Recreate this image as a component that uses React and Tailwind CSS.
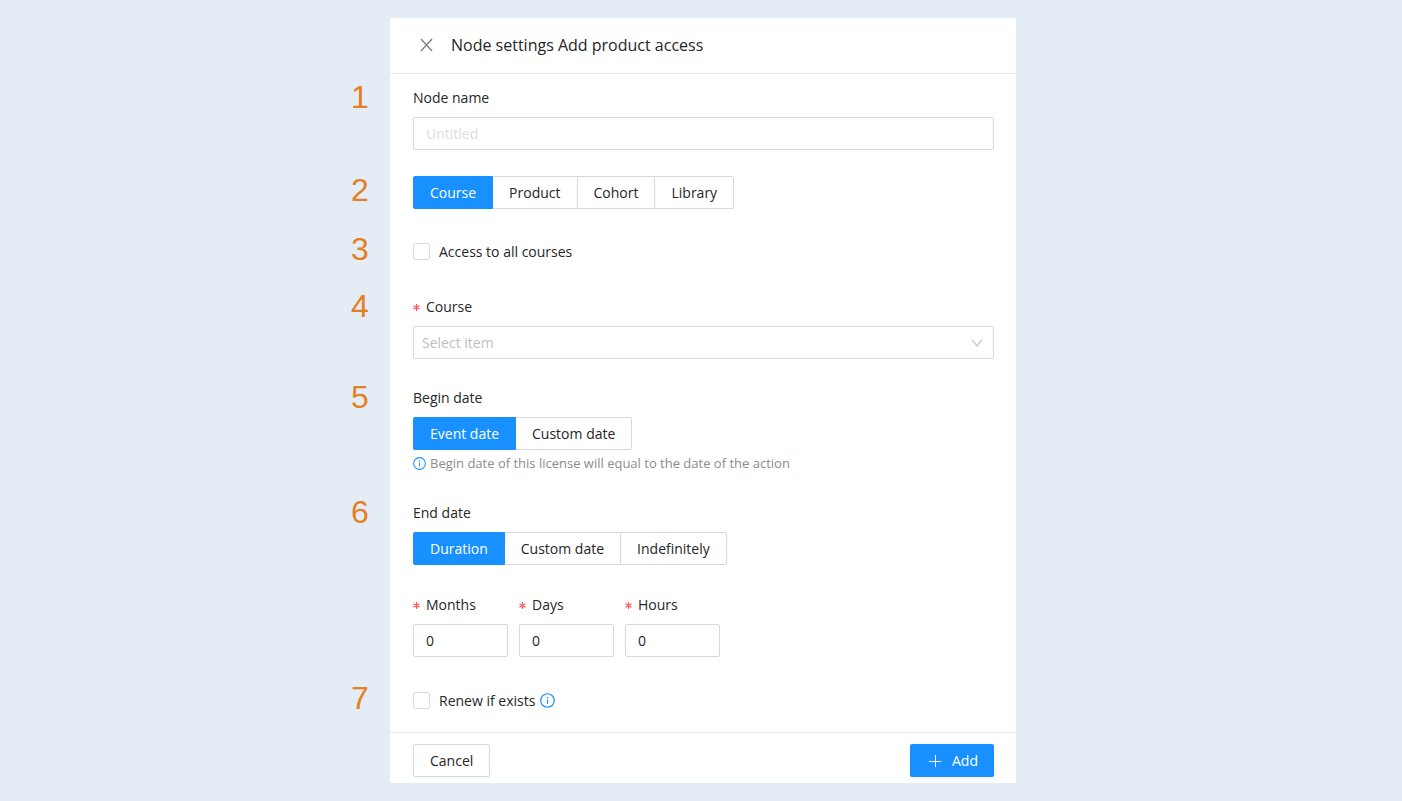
import { useState } from 'react';

const ACCESS_TYPES = ['Course', 'Product', 'Cohort', 'Library'];
const BEGIN_OPTIONS = ['Event date', 'Custom date'];
const END_OPTIONS = ['Duration', 'Custom date', 'Indefinitely'];

function InfoIcon({ className }) {
  return (
    <svg viewBox="0 0 16 16" fill="none" stroke="#1890ff" className={className} aria-hidden="true">
      <circle cx="8" cy="8" r="7.2" strokeWidth="1.3" />
      <path d="M8 7v4.6" strokeWidth="1.3" />
      <path d="M8 4.2v1.5" strokeWidth="1.5" />
    </svg>
  );
}

// One form row: number in the gutter, fields on the white panel
function Section({ number, labelled, className, children }) {
  return (
    <section className="contents">
      <div className={`${className} ${labelled ? 'leading-9' : 'leading-7'} pl-px font-['Liberation_Sans',sans-serif] text-[32px] text-[#e67e22]`}>
        {number}
      </div>
      <div className={`${className} bg-white pr-[22px] pl-[23px]`}>{children}</div>
    </section>
  );
}

function FieldLabel({ htmlFor, required, children }) {
  const Tag = htmlFor ? 'label' : 'div';
  return (
    <Tag htmlFor={htmlFor} className="flex h-[38px] items-center">
      {required && (
        <svg viewBox="0 0 8 8" stroke="#ff4d4f" strokeWidth="1.2" className="mr-1.5 size-[7px]" aria-hidden="true">
          <path d="M4 0v8M.5 2l7 4M7.5 2l-7 4" />
        </svg>
      )}
      {children}
    </Tag>
  );
}

function ButtonGroup({ options, value, onChange, label }) {
  return (
    <div role="group" aria-label={label} className="flex h-[33px]">
      {options.map((option) => (
        <button
          key={option}
          type="button"
          aria-pressed={value === option}
          onClick={() => onChange(option)}
          className={`-ml-px border px-4 first:ml-0 first:rounded-l-xs last:rounded-r-xs ${
            value === option ? 'z-10 border-[#1890ff] bg-[#1890ff] text-white' : 'border-[#d9d9d9] bg-white hover:text-[#1890ff]'
          }`}
        >
          {option}
        </button>
      ))}
    </div>
  );
}

function Checkbox({ id, children }) {
  return (
    <div className="flex h-[33px] items-center">
      <input
        id={id}
        type="checkbox"
        className="mr-[9px] size-[17px] appearance-none rounded-xs border border-[#d9d9d9] bg-white checked:border-[#1890ff] checked:bg-[#1890ff]"
      />
      {children}
    </div>
  );
}

export default function App() {
  const [accessType, setAccessType] = useState('Course');
  const [begin, setBegin] = useState('Event date');
  const [end, setEnd] = useState('Duration');
  const [duration, setDuration] = useState({ Months: 0, Days: 0, Hours: 0 });

  return (
    <div className="min-h-screen bg-[#e4ecf6] py-[18px] font-['Open_Sans','Noto_Sans',sans-serif] text-sm text-[#262626]">
      <form onSubmit={(e) => e.preventDefault()} className="grid grid-cols-[40px_minmax(0,626px)_36px] justify-center [&>section>*:first-child]:col-start-1">
        {/* Header */}
        <header className="col-start-2 flex h-14 items-center border-b border-[#ececec] bg-white px-[30px] pb-0.5">
          <button type="button" aria-label="Close" className="mr-[18px]">
            <svg viewBox="0 0 13 14" fill="none" stroke="#858585" strokeWidth="1.5" className="h-3.5 w-[13px]">
              <path d="M1 1l11 12M12 1l-11 12" />
            </svg>
          </button>
          <h1 className="text-base">Node settings Add product access</h1>
        </header>

        <Section number="1" labelled className="pt-[5px]">
          <FieldLabel htmlFor="node-name">Node name</FieldLabel>
          <input
            id="node-name"
            type="text"
            placeholder="Untitled"
            className="block h-[33px] w-full rounded-xs border border-[#d9d9d9] px-3 outline-none placeholder:text-[#dedede] focus:border-[#1890ff]"
          />
        </Section>

        <Section number="2" className="pt-[26px]">
          <ButtonGroup label="Access type" options={ACCESS_TYPES} value={accessType} onChange={setAccessType} />
        </Section>

        <Section number="3" className="pt-[26px]">
          <Checkbox id="all-courses">
            <label htmlFor="all-courses">Access to all courses</label>
          </Checkbox>
        </Section>

        <Section number="4" labelled className="pt-5">
          <FieldLabel htmlFor="course" required>Course</FieldLabel>
          <div className="relative">
            <select
              id="course"
              defaultValue=""
              className="block h-[33px] w-full appearance-none rounded-xs border border-[#d9d9d9] bg-white px-2 text-[#bfbfbf] outline-none focus:border-[#1890ff]"
            >
              <option value="">Select item</option>
            </select>
            <svg viewBox="0 0 12 8" fill="none" stroke="#bfbfbf" strokeWidth="1.2" className="pointer-events-none absolute top-[13px] right-[11px] h-2 w-3">
              <path d="M1 .5l5 6.5 5-6.5" />
            </svg>
          </div>
        </Section>

        <Section number="5" labelled className="pt-5">
          <FieldLabel>Begin date</FieldLabel>
          <ButtonGroup label="Begin date" options={BEGIN_OPTIONS} value={begin} onChange={setBegin} />
          <p className="mt-0.5 flex h-[22px] items-center gap-1 text-[13px] text-[#8c8c8c]">
            <InfoIcon className="size-[13px] shrink-0" />
            Begin date of this license will equal to the date of the action
          </p>
        </Section>

        <Section number="6" labelled className="pt-5">
          <FieldLabel>End date</FieldLabel>
          <ButtonGroup label="End date" options={END_OPTIONS} value={end} onChange={setEnd} />
          <div className="flex gap-[11px] pt-[21px]">
            {Object.keys(duration).map((unit) => (
              <div key={unit}>
                <FieldLabel htmlFor={unit} required>{unit}</FieldLabel>
                <input
                  id={unit}
                  type="number"
                  min="0"
                  value={duration[unit]}
                  onChange={(e) => setDuration({ ...duration, [unit]: e.target.value })}
                  className="block h-[33px] w-[95px] rounded-xs border border-[#d9d9d9] px-3 outline-none focus:border-[#1890ff]"
                />
              </div>
            ))}
          </div>
        </Section>

        <Section number="7" className="pt-[27px] pb-[15px]">
          <Checkbox id="renew">
            <label htmlFor="renew">Renew if exists</label>
            <InfoIcon className="ml-[5px] size-[15px]" />
          </Checkbox>
        </Section>

        {/* Footer */}
        <footer className="col-start-2 flex justify-between border-t border-[#e8e8e8] bg-white pt-[11px] pr-[22px] pb-1.5 pl-[23px]">
          <button type="button" className="h-[33px] rounded-xs border border-[#d9d9d9] px-4 shadow-[0_2px_0_rgba(0,0,0,0.02)]">
            Cancel
          </button>
          <button type="submit" className="flex h-[33px] items-center gap-[11px] rounded-xs bg-[#1890ff] pr-4 pl-[19px] text-white shadow-[0_2px_0_rgba(0,0,0,0.04)]">
            <svg viewBox="0 0 12 12" stroke="currentColor" className="size-3" aria-hidden="true">
              <path d="M6.5 0v12M0 6.5h12" />
            </svg>
            Add
          </button>
        </footer>
      </form>
    </div>
  );
}
